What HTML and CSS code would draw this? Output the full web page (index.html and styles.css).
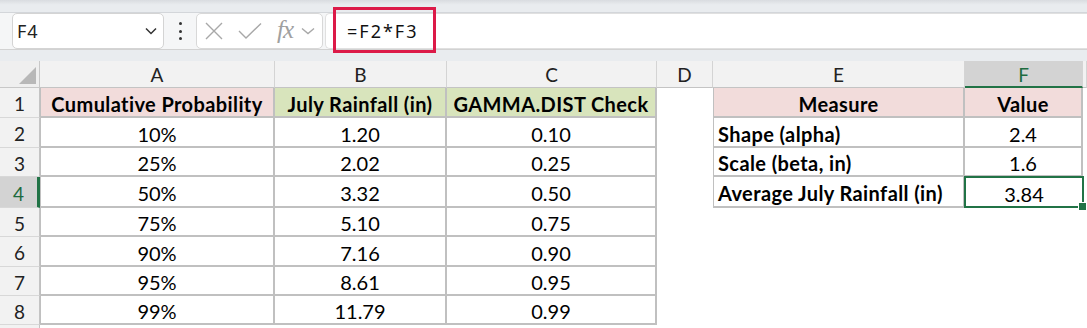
FILE: index.html
```html
<!DOCTYPE html>
<html lang="en">
<head>
    <meta charset="UTF-8">
    <title>Gamma Rainfall</title>
    <link rel="stylesheet" href="styles.css">
</head>
<body>
    <div class="topband"></div>

    <div class="formula-row">
        <div class="namebox">
            <span>F4</span>
            <svg class="chev" width="12" height="8" viewBox="0 0 12 8"><path d="M1 1.5 L6 6.5 L11 1.5" fill="none" stroke="#333" stroke-width="1.5"/></svg>
        </div>
        <div class="dots"><i></i><i></i><i></i></div>
        <div class="iconbox">
            <svg class="ic-x" width="18" height="18" viewBox="0 0 18 18"><path d="M1 1 L17 17 M17 1 L1 17" stroke="#a8a8a8" stroke-width="1.4" fill="none"/></svg>
            <svg class="ic-ok" width="24" height="18" viewBox="0 0 24 18"><path d="M1 9 L8 16 L23 1.5" stroke="#a8a8a8" stroke-width="1.4" fill="none"/></svg>
            <span class="fx">fx</span>
            <svg class="ic-dd" width="14" height="8" viewBox="0 0 14 8"><path d="M1 1.5 L7 6.5 L13 1.5" fill="none" stroke="#a8a8a8" stroke-width="1.4"/></svg>
        </div>
        <div class="formula">
            <span>=F2*F3</span>
            <div class="highlight"></div>
        </div>
    </div>

    <div class="band"></div>

    <div class="sheet">
        <div class="corner"><div class="tri"></div></div>
        <div class="ch">A</div>
        <div class="ch">B</div>
        <div class="ch">C</div>
        <div class="ch">D</div>
        <div class="ch">E</div>
        <div class="ch active">F</div>
        <div class="ch last"></div>

        <div class="rh">1</div>
        <div class="c first pink b">Cumulative Probability</div>
        <div class="c green b">July Rainfall (in)</div>
        <div class="c green b">GAMMA.DIST Check</div>
        <div class="e"></div>
        <div class="c first pink b">Measure</div>
        <div class="c pink b">Value</div>
        <div class="e"></div>

        <div class="rh">2</div>
        <div class="c first">10%</div>
        <div class="c">1.20</div>
        <div class="c">0.10</div>
        <div class="e"></div>
        <div class="c first b left">Shape (alpha)</div>
        <div class="c">2.4</div>
        <div class="e"></div>

        <div class="rh">3</div>
        <div class="c first">25%</div>
        <div class="c">2.02</div>
        <div class="c">0.25</div>
        <div class="e"></div>
        <div class="c first b left">Scale (beta, in)</div>
        <div class="c">1.6</div>
        <div class="e"></div>

        <div class="rh active">4</div>
        <div class="c first">50%</div>
        <div class="c">3.32</div>
        <div class="c">0.50</div>
        <div class="e"></div>
        <div class="c first b left">Average July Rainfall (in)</div>
        <div class="c selected">3.84<div class="handle"></div></div>
        <div class="e"></div>

        <div class="rh">5</div>
        <div class="c first">75%</div>
        <div class="c">5.10</div>
        <div class="c">0.75</div>
        <div class="e"></div>
        <div class="e"></div>
        <div class="e"></div>
        <div class="e"></div>

        <div class="rh">6</div>
        <div class="c first">90%</div>
        <div class="c">7.16</div>
        <div class="c">0.90</div>
        <div class="e"></div>
        <div class="e"></div>
        <div class="e"></div>
        <div class="e"></div>

        <div class="rh">7</div>
        <div class="c first">95%</div>
        <div class="c">8.61</div>
        <div class="c">0.95</div>
        <div class="e"></div>
        <div class="e"></div>
        <div class="e"></div>
        <div class="e"></div>

        <div class="rh">8</div>
        <div class="c first">99%</div>
        <div class="c">11.79</div>
        <div class="c">0.99</div>
        <div class="e"></div>
        <div class="e"></div>
        <div class="e"></div>
        <div class="e"></div>

        <div class="rh"></div>
    </div>
</body>
</html>
```

FILE: styles.css
```css
body {
    margin: 0;
    width: 1087px;
    height: 328px;
    overflow: hidden;
    background: #ffffff;
    font-family: Lato, "Liberation Sans", sans-serif;
}
.topband {
    height: 12px;
    background: linear-gradient(#d9dce0, #e9ecef 40%);
    border-bottom: 1px solid #d3d6da;
}
.formula-row {
    display: flex;
    height: 36px;
    background: #f5f6f7;
}
.namebox {
    box-sizing: border-box;
    margin-left: 12px;
    width: 152px;
    background: #fff;
    border: 1px solid #d4d4d4;
    border-radius: 5px;
    display: flex;
    align-items: center;
    justify-content: space-between;
    padding: 0 6px 0 4px;
    font-family: "Noto Sans", sans-serif;
    font-size: 18px;
    letter-spacing: 1px;
    color: #222;
}
.dots {
    width: 32px;
    display: flex;
    flex-direction: column;
    align-items: center;
    justify-content: center;
    gap: 4.5px;
}
.dots i {
    width: 3px;
    height: 3px;
    background: #333;
    border-radius: 50%;
}
.iconbox {
    box-sizing: border-box;
    width: 127px;
    background: #fff;
    border: 1px solid #d8d8d8;
    border-radius: 5px;
    display: flex;
    align-items: center;
}
.ic-x {
    margin-left: 8px;
}
.ic-ok {
    margin-left: 15px;
}
.fx {
    font-family: "Liberation Serif", serif;
    font-style: italic;
    font-size: 25px;
    letter-spacing: -1px;
    color: #a0a0a0;
    margin-left: 15px;
    margin-top: -2px;
}
.ic-dd {
    margin-left: 8px;
}
.formula {
    position: relative;
    flex: 1;
    margin-left: 2px;
    background: #fff;
    border: 1px solid #e0e0e0;
    border-right: none;
    border-radius: 5px 0 0 5px;
    display: flex;
    align-items: center;
    padding-left: 21px;
    font-family: "Noto Sans", sans-serif;
    font-size: 18px;
    letter-spacing: 2px;
    color: #111;
}
.highlight {
    position: absolute;
    left: 7px;
    top: -7px;
    width: 103px;
    height: 46px;
    box-sizing: border-box;
    border: 3px solid #dc1a48;
}
.band {
    height: 11px;
    background: #e9ecef;
    border-top: 1px solid #d2d2d2;
}
.sheet {
    display: grid;
    grid-template-columns: 40px 235px 172px 210px 56px 252px 118px 4px;
    grid-template-rows: 27px 30px 30px 29px 31px 29px 30px 29px 29px 10px;
}
.sheet > div {
    box-sizing: border-box;
}
.corner {
    position: relative;
    background: #efefef;
    border-right: 1px solid #c8c8c8;
    border-bottom: 1px solid #c8c8c8;
}
.tri {
    position: absolute;
    right: 3px;
    bottom: 3px;
    width: 0;
    height: 0;
    border-left: 17px solid transparent;
    border-bottom: 17px solid #b8b8b8;
}
.ch {
    background: #f2f2f2;
    border-right: 1px solid #d4d4d4;
    border-bottom: 1px solid #c4c4c4;
    display: flex;
    align-items: center;
    justify-content: center;
    padding-top: 1px;
    font-size: 19px;
    color: #222;
}
.ch.active {
    background: #d3d3d3;
    color: #1d6b3f;
    border-bottom: 2px solid #217346;
}
.rh {
    background: #f2f2f2;
    border-right: 1px solid #c4c4c4;
    border-bottom: 1px solid #d8d8d8;
    display: flex;
    align-items: center;
    justify-content: center;
    padding-top: 2px;
    font-size: 19px;
    color: #222;
}
.rh.active {
    background: #d3d3d3;
    color: #1d6b3f;
    border-right: 3px solid #217346;
}
.c {
    border-right: 2px solid #c0c0c0;
    border-bottom: 2px solid #c0c0c0;
    display: flex;
    align-items: center;
    justify-content: center;
    padding-top: 3px;
    font-size: 20px;
    color: #000;
}
.c.first {
    border-left: 1px solid #c0c0c0;
}
.c.b {
    font-weight: bold;
    letter-spacing: 0.4px;
}
.c.left {
    justify-content: flex-start;
    padding-left: 4px;
}
.pink {
    background: #f2dcdb;
}
.green {
    background: #d8e4bc;
}
.selected {
    position: relative;
    border: 2px solid #217346;
    margin: -1px -1px 0 -1px;
}
.handle {
    position: absolute;
    right: -5px;
    bottom: -5px;
    width: 7px;
    height: 7px;
    background: #217346;
    border: 1px solid #fff;
}
```
